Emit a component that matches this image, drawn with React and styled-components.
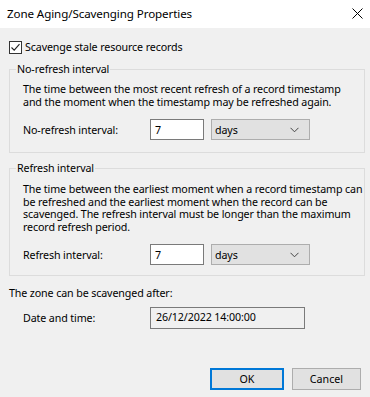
import React from 'react';
import styled, { createGlobalStyle } from 'styled-components';

const GlobalStyle = createGlobalStyle`
  html, body { margin: 0; padding: 0; background: #f0f0f0; }
  body {
    font-family: "Noto Sans", "Liberation Sans", sans-serif;
    font-size: 10.7px;
    letter-spacing: -0.12px;
    color: #000;
  }
  * { box-sizing: border-box; }
`;

const Window = styled.div`
  width: 370px;
  height: 397px;
  display: flex;
  flex-direction: column;
  background: #f0f0f0;
  overflow: hidden;
`;

const TitleBar = styled.div`
  height: 28px;
  flex-shrink: 0;
  background: #fff;
  display: flex;
  align-items: center;
  justify-content: space-between;
  padding: 0 4px 1px 7px;
  font-size: 11.6px;
  letter-spacing: -0.1px;
`;

const CloseButton = styled.div`
  width: 18px;
  height: 18px;
  display: flex;
  align-items: center;
  justify-content: center;
`;

const Body = styled.div`
  flex: 1;
  display: flex;
  flex-direction: column;
  padding: 12px 5px 7px 9px;
`;

const CheckRow = styled.label`
  display: flex;
  align-items: center;
  gap: 3px;
  height: 14px;
`;

const CheckBox = styled.span`
  width: 13px;
  height: 13px;
  border: 1px solid #333;
  background: #fff;
  display: flex;
  align-items: center;
  justify-content: center;
`;

const Group = styled.fieldset`
  width: 356px;
  margin: ${p => p.$top}px 0 0 0;
  padding: ${p => p.$padTop}px 0 ${p => p.$padBottom}px 13px;
  border: 1px solid #dcdcdc;
  min-width: 0;
`;

const Legend = styled.legend`
  margin-left: -7px;
  padding: 0 1px;
  line-height: 14px;
`;

const Desc = styled.div`
  line-height: 12.5px;
  white-space: nowrap;
`;

const FieldRow = styled.div`
  display: flex;
  align-items: center;
  margin-top: ${p => p.$top}px;
`;

const FieldLabel = styled.span`
  width: 127px;
  flex-shrink: 0;
`;

const NumberBox = styled.div`
  width: 54px;
  height: 21px;
  border: 1px solid #7a7a7a;
  background: #fff;
  padding: 1px 0 0 4px;
  display: flex;
  align-items: center;
`;

const Select = styled.div`
  width: 99px;
  height: 21px;
  margin-left: 7px;
  border: 1px solid #adadad;
  background: #e1e1e1;
  display: flex;
  align-items: center;
  justify-content: space-between;
  padding: 1px 10px 0 3px;
`;

const Caption = styled.div`
  margin-top: 10px;
  line-height: 14px;
`;

const DateRow = styled.div`
  display: flex;
  align-items: center;
  margin-top: 7px;
  padding-left: 14px;
`;

const DateBox = styled.div`
  width: 155px;
  height: 22px;
  border: 1px solid #7a7a7a;
  background: #f0f0f0;
  padding: 2px 0 0 5px;
`;

const ButtonBar = styled.div`
  margin-top: auto;
  display: flex;
  justify-content: flex-end;
  gap: 8px;
  padding-right: 4px;
`;

const Button = styled.button`
  width: ${p => p.$w}px;
  height: 22px;
  font: inherit;
  color: #000;
  background: #e1e1e1;
  border: ${p => (p.$primary ? '2px solid #0078d7' : '1px solid #adadad')};
  padding: 0;
`;

const Check = () => (
  <svg width="11" height="11" viewBox="0 0 11 11">
    <path d="M1.5 5.5 L4.2 8.2 L9.5 2.2" fill="none" stroke="#222" strokeWidth="1.1" />
  </svg>
);

const Chevron = () => (
  <svg width="9" height="6" viewBox="0 0 9 6">
    <path d="M0.5 0.8 L4.5 4.8 L8.5 0.8" fill="none" stroke="#444" strokeWidth="1" />
  </svg>
);

const CloseIcon = () => (
  <svg width="11" height="11" viewBox="0 0 11 11">
    <path d="M0.5 0.5 L10.5 10.5 M10.5 0.5 L0.5 10.5" stroke="#000" strokeWidth="1" />
  </svg>
);

const IntervalRow = ({ label, top }) => (
  <FieldRow $top={top}>
    <FieldLabel>{label}</FieldLabel>
    <NumberBox>7</NumberBox>
    <Select>
      <span>days</span>
      <Chevron />
    </Select>
  </FieldRow>
);

export default function App() {
  return (
    <Window>
      <GlobalStyle />
      <TitleBar>
        <span>Zone Aging/Scavenging Properties</span>
        <CloseButton><CloseIcon /></CloseButton>
      </TitleBar>
      <Body>
        <CheckRow>
          <CheckBox><Check /></CheckBox>
          <span>Scavenge stale resource records</span>
        </CheckRow>

        <Group $top={8} $padTop={7} $padBottom={12}>
          <Legend>No-refresh interval</Legend>
          <Desc>
            The time between the most recent refresh of a record timestamp<br />
            and the moment when the timestamp may be refreshed again.
          </Desc>
          <IntervalRow label="No-refresh interval:" top={11} />
        </Group>

        <Group $top={8} $padTop={8} $padBottom={10}>
          <Legend>Refresh interval</Legend>
          <Desc>
            The time between the earliest moment when a record timestamp can<br />
            be refreshed and the earliest moment when the record can be<br />
            scavenged. The refresh interval must be longer than the maximum<br />
            record refresh period.
          </Desc>
          <IntervalRow label="Refresh interval:" top={11} />
        </Group>

        <Caption>The zone can be scavenged after:</Caption>
        <DateRow>
          <FieldLabel>Date and time:</FieldLabel>
          <DateBox>26/12/2022 14:00:00</DateBox>
        </DateRow>

        <ButtonBar>
          <Button $primary $w={74}>OK</Button>
          <Button $w={69}>Cancel</Button>
        </ButtonBar>
      </Body>
    </Window>
  );
}
